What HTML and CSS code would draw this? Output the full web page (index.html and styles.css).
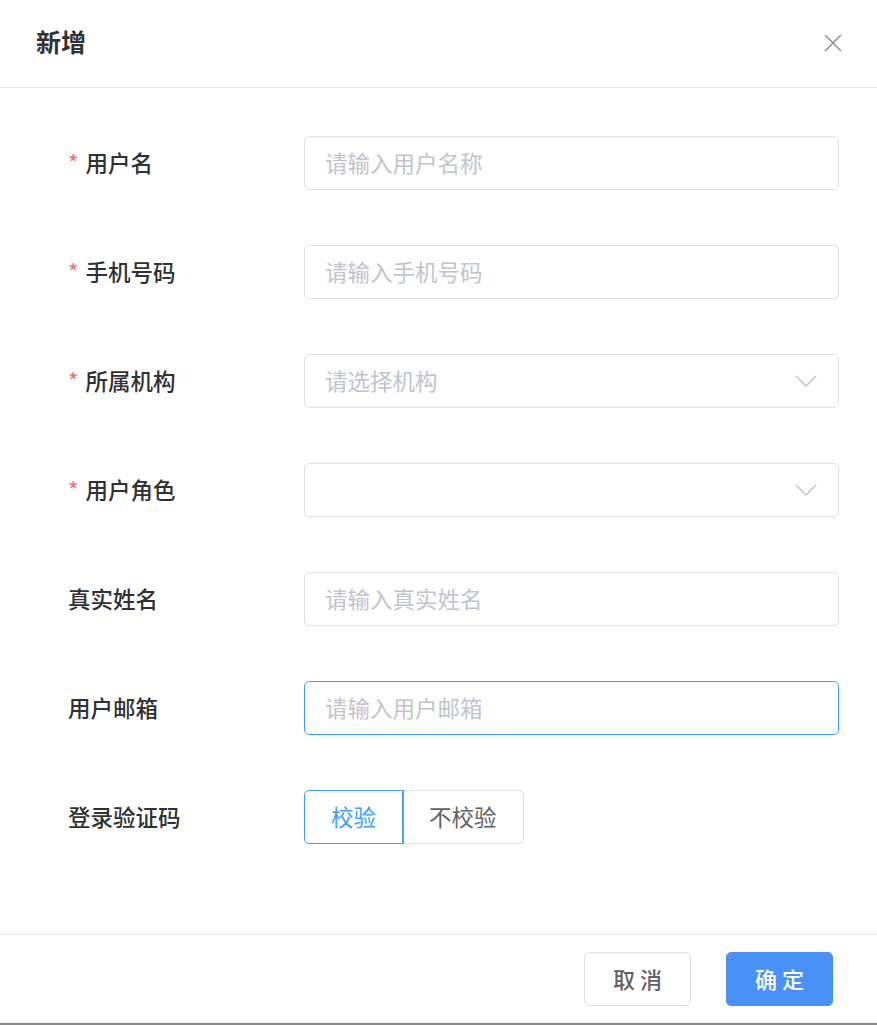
FILE: index.html
```html
<!DOCTYPE html>
<html lang="zh-CN">
<head>
<meta charset="utf-8">
<title>新增</title>
<link rel="stylesheet" href="styles.css">
</head>
<body>
<div class="dialog">
  <div class="dialog-header">
    <span class="dialog-title">新增</span>
    <button class="dialog-close" aria-label="关闭">
      <svg width="18" height="18" viewBox="0 0 18 18"><path d="M1 1 L17 17 M17 1 L1 17" stroke="#909399" stroke-width="1.6" fill="none"/></svg>
    </button>
  </div>
  <div class="dialog-body">
    <div class="form-item">
      <label class="form-label required">用户名</label>
      <div class="input"><span class="placeholder">请输入用户名称</span></div>
    </div>
    <div class="form-item">
      <label class="form-label required">手机号码</label>
      <div class="input"><span class="placeholder">请输入手机号码</span></div>
    </div>
    <div class="form-item">
      <label class="form-label required">所属机构</label>
      <div class="input select"><span class="placeholder">请选择机构</span>
        <svg class="arrow" width="22" height="12" viewBox="0 0 22 12"><path d="M1 1 L11 11 L21 1" stroke="#c0c4cc" stroke-width="1.5" fill="none"/></svg>
      </div>
    </div>
    <div class="form-item">
      <label class="form-label required">用户角色</label>
      <div class="input select"><span class="placeholder"></span>
        <svg class="arrow" width="22" height="12" viewBox="0 0 22 12"><path d="M1 1 L11 11 L21 1" stroke="#c0c4cc" stroke-width="1.5" fill="none"/></svg>
      </div>
    </div>
    <div class="form-item">
      <label class="form-label">真实姓名</label>
      <div class="input"><span class="placeholder">请输入真实姓名</span></div>
    </div>
    <div class="form-item">
      <label class="form-label">用户邮箱</label>
      <div class="input focused"><span class="placeholder">请输入用户邮箱</span></div>
    </div>
    <div class="form-item">
      <label class="form-label">登录验证码</label>
      <div class="radio-group">
        <span class="radio-btn active">校验</span>
        <span class="radio-btn">不校验</span>
      </div>
    </div>
  </div>
  <div class="dialog-footer">
    <button class="btn btn-default">取 消</button>
    <button class="btn btn-primary">确 定</button>
  </div>
  <div class="dialog-edge"></div>
</div>
</body>
</html>
```

FILE: styles.css
```css
* { box-sizing: border-box; }
html, body {
  margin: 0;
  padding: 0;
  background: #fff;
}
body {
  font-family: "Noto Sans CJK SC", "Noto Sans", sans-serif;
  color: #303133;
}
.dialog {
  width: 877px;
  height: 1025px;
  display: flex;
  flex-direction: column;
}
.dialog-header {
  height: 88px;
  border-bottom: 1px solid #e8e8e8;
  display: flex;
  align-items: center;
  justify-content: space-between;
  padding: 0 35px 0 36px;
}
.dialog-title {
  font-size: 25px;
  font-weight: 700;
  color: #303133;
  line-height: 1;
  margin-top: -5px;
}
.dialog-close {
  border: 0;
  background: none;
  padding: 0;
  width: 18px;
  height: 18px;
  display: flex;
  margin-top: -2px;
}
.dialog-body {
  flex: 1;
  padding: 48px 38px 0 68px;
}
.form-item {
  display: flex;
  align-items: center;
  height: 54px;
  margin-bottom: 55px;
}
.form-label {
  width: 236px;
  flex: none;
  font-size: 22.5px;
  font-weight: 500;
  color: #303133;
  margin-top: -3px;
}
.form-label.required::before {
  content: "*";
  color: #f56c6c;
  margin-right: 7px;
  font-weight: 400;
}
.input {
  width: 535px;
  height: 54px;
  border: 1px solid #dcdfe6;
  border-radius: 5px;
  display: flex;
  align-items: center;
  justify-content: space-between;
  padding: 0 21px 0 20px;
}
.input.focused {
  border-color: #409eff;
}
.placeholder {
  font-size: 22.5px;
  color: #c0c4cc;
  margin-top: -3px;
}
.arrow {
  display: block;
}
.radio-group {
  display: flex;
  height: 54px;
}
.radio-btn {
  display: flex;
  align-items: center;
  font-size: 22.5px;
  color: #606266;
  border: 1px solid #dcdfe6;
  padding: 0 26px 3px;
}
.radio-btn:first-child {
  border-radius: 5px 0 0 5px;
}
.radio-btn:last-child {
  border-left: 0;
  border-radius: 0 5px 5px 0;
}
.radio-btn.active {
  color: #409eff;
  border-color: #409eff;
  box-shadow: 1px 0 0 #409eff;
  position: relative;
}
.dialog-footer {
  height: 88px;
  border-top: 1px solid #e8e8e8;
  display: flex;
  justify-content: flex-end;
  align-items: flex-start;
  gap: 35px;
  padding: 17px 44px 0 0;
}
.btn {
  width: 107px;
  height: 54px;
  border-radius: 5px;
  font-family: "Noto Sans CJK SC", "Noto Sans", sans-serif;
  font-size: 22px;
  font-weight: 500;
  padding: 0 0 3px;
}
.btn-default {
  background: #fff;
  border: 1px solid #dcdfe6;
  color: #606266;
}
.btn-primary {
  background: #4a91f7;
  border: 1px solid #4a91f7;
  color: #fff;
}
.dialog-edge {
  height: 3px;
  border-top: 1px solid #f0f0f0;
  border-bottom: 2px solid #8a8a8a;
}
```
